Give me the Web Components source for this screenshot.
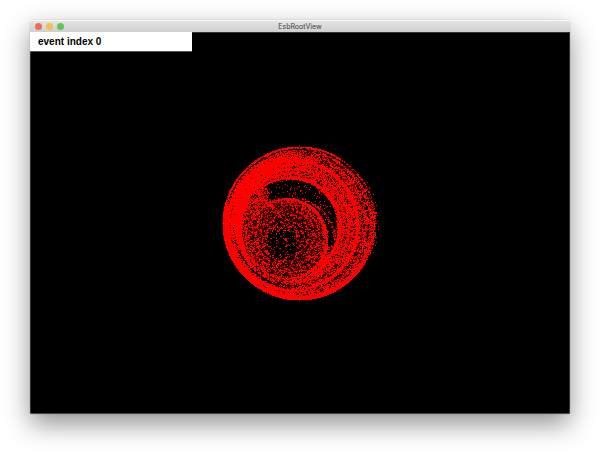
<!DOCTYPE html>
<html lang="en">
<head>
<meta charset="utf-8">
<title>EsbRootView</title>
<style>
  html, body { height: 100%; margin: 0; }
  body {
    box-sizing: border-box;
    display: flex;
    padding: 20px 30px 40px;
    background: #fff;
    font-family: "Liberation Sans", Arial, sans-serif;
    overflow: hidden;
  }
</style>
</head>
<body>
<app-window heading="EsbRootView">
  <event-label>event index 0</event-label>
  <event-plot></event-plot>
</app-window>

<script>
class AppWindow extends HTMLElement {
  constructor() {
    super();
    this.attachShadow({ mode: 'open' }).innerHTML = `
      <style>
        :host {
          flex: 1; display: flex; flex-direction: column; min-width: 0;
          border-radius: 3px 3px 2px 2px;
          box-shadow: 0 0 2px rgba(0,0,0,.2), 0 10px 26px rgba(0,0,0,.43);
        }
        header {
          display: grid; grid-template-columns: 1fr auto 1fr; align-items: center;
          box-sizing: border-box; height: 12px; padding: 0 5px;
          border-top: 1px solid #f8f8f8; border-radius: 3px 3px 0 0;
          background: linear-gradient(#e4e4e4, #cfcfcf);
        }
        .lights { display: flex; gap: 4px; }
        button { width: 7px; height: 7px; padding: 0; border: 0; border-radius: 50%; background: var(--c); }
        h1 { margin: 0; font: 7px/11px Inter, "Liberation Sans", sans-serif; color: #404040; }
        main {
          flex: 1; display: grid; grid-template-rows: auto 1fr; min-height: 0;
          background: #000; border-radius: 0 0 2px 2px;
          box-shadow: inset 0 1px #333, inset 0 -1px #444, inset 1px 0 #333, inset -1px 0 #333;
        }
      </style>
      <header>
        <div class="lights">
          <button aria-label="Close" style="--c:#ed6a5f"></button>
          <button aria-label="Minimize" style="--c:#f5bf4f"></button>
          <button aria-label="Zoom" style="--c:#61c654"></button>
        </div>
        <h1></h1>
      </header>
      <main><slot></slot></main>`;
    this.shadowRoot.querySelector('h1').textContent = this.getAttribute('heading');
  }
}

class EventLabel extends HTMLElement {
  constructor() {
    super();
    this.attachShadow({ mode: 'open' }).innerHTML = `
      <style>
        :host { display: block; }
        div {
          box-sizing: border-box; width: 30%; height: 20px; padding: 0 8px;
          border-bottom: 1px solid #555;
          background: #fff; color: #000; font-size: 10px; font-weight: bold; line-height: 19px;
        }
      </style>
      <div><slot></slot></div>`;
  }
}

/* Scatter plot of detector hits on nested, off-centre rings. */
class EventPlot extends HTMLElement {
  constructor() {
    super();
    this.attachShadow({ mode: 'open' }).innerHTML = `
      <style>
        :host { display: grid; place-items: center; padding-bottom: 16px; }
        canvas { display: block; }
      </style>
      <canvas width="170" height="170" role="img" aria-label="Event hits"></canvas>`;
  }
  connectedCallback() {
    const ctx = this.shadowRoot.querySelector('canvas').getContext('2d');
    let seed = 20117;
    const rnd = () => {
      seed = (seed + 0x6D2B79F5) | 0;
      let t = Math.imul(seed ^ (seed >>> 15), 1 | seed);
      t = (t + Math.imul(t ^ (t >>> 7), 61 | t)) ^ t;
      return ((t ^ (t >>> 14)) >>> 0) / 4294967296;
    };
    const clamp = v => Math.max(0, Math.min(1, v));
    const image = ctx.createImageData(170, 170);
    let carry = false;
    for (let y = 0; y < 170; y++) for (let x = 0; x < 170; x++) {
      const dist = (cx, cy) => Math.hypot(x - cx, y - cy);
      const bump = (d, r, w) => Math.exp(-(((d - r) / w) ** 2));
      const out = dist(84, 83), mid = dist(77, 85), hole = dist(74, 87);
      const small = dist(71, 99), core = dist(72, 95);
      const a = Math.atan2(y - 83, x - 84);
      const left = clamp(-Math.cos(a + 0.15) + 0.25);
      const bottom = clamp(Math.sin(a) * 1.3);
      const upperLeft = clamp(Math.cos(a + 2.55) * 1.6 - 0.4);
      const right = clamp(Math.cos(a + 0.3) * 1.5);
      let p = 0;
      if (out <= 77) {
        if (small < 42) {
          p = 0.24 + 0.14 * Math.cos(core * 1.2) + 0.2 * clamp((small - 15) / 25);
          if (dist(66, 103) < 15) p *= 0.5;
          p += bump(small, 40, 1.8) * (0.6 - 0.3 * left);
        } else if (hole < 48) {
          const empty = clamp((x - y * 0.3 - 31) / 9) * clamp((112 - y) / 8);
          p = 0.62 * (1 - empty) + 0.07 * empty;
          p += bump(dist(74, 103), 46, 1.2) * 0.4 * clamp((x - 80) / 20);
        } else {
          p = 0.66 + 0.12 * Math.cos(mid * 1.45);
          p += bump(hole, 50, 2.6) * 0.35 * (1 - left * 0.5);
          p += bump(mid, 65, 2) * 0.45;
          p += bump(mid, 56, 3) * 0.15;
          p += upperLeft * bump(out, 63, 9) * 0.3;
          p -= bump(mid, 69, 1) * 0.4 * right;
          p -= bump(dist(81, 84), 72, 1.2) * 0.4 * right;
          p -= bottom * bump(mid, 60, 1.2) * 0.4;
          p -= bump(out, 66, 1.3) * 0.4 * bottom;
        }
        p += bump(out, 75, 3) * (bottom * 0.5 + (a > 2.7 || a < -2.9 ? 0.4 : 0));
        if (a < -0.2 && a > -2.8) {
          p -= bump(out, 74.3, 0.9) * 0.65;
          if (out > 75.3) p = a < -1 ? 0.97 : 0.55;
        }
        if (out > 75.5 && a > -0.2 && a < 0.5) p = 0.5;
        if (x === 83 && y > 8 && y < 18) p = 0.1;
      } else if (x > 110 && out < 80 && a > -0.65 && a < 0.4) {
        p = 0.1;
      }
      /* A hit often spills into the pixel to its right, so dots clump slightly. */
      const hit = rnd() < (p > 0.9 ? p : p * 0.84);
      const spill = carry && p > 0.15 && rnd() < 0.22;
      carry = hit;
      const i = (y * 170 + x) * 4;
      if (hit || spill) {
        image.data[i] = 255;
        image.data[i + 3] = 255;
      } else if (p > 0.2) {
        image.data[i] = rnd() * 110;
        image.data[i + 3] = 255;
      }
    }
    ctx.putImageData(image, 0, 0);
  }
}

customElements.define('app-window', AppWindow);
customElements.define('event-label', EventLabel);
customElements.define('event-plot', EventPlot);
</script>
</body>
</html>
